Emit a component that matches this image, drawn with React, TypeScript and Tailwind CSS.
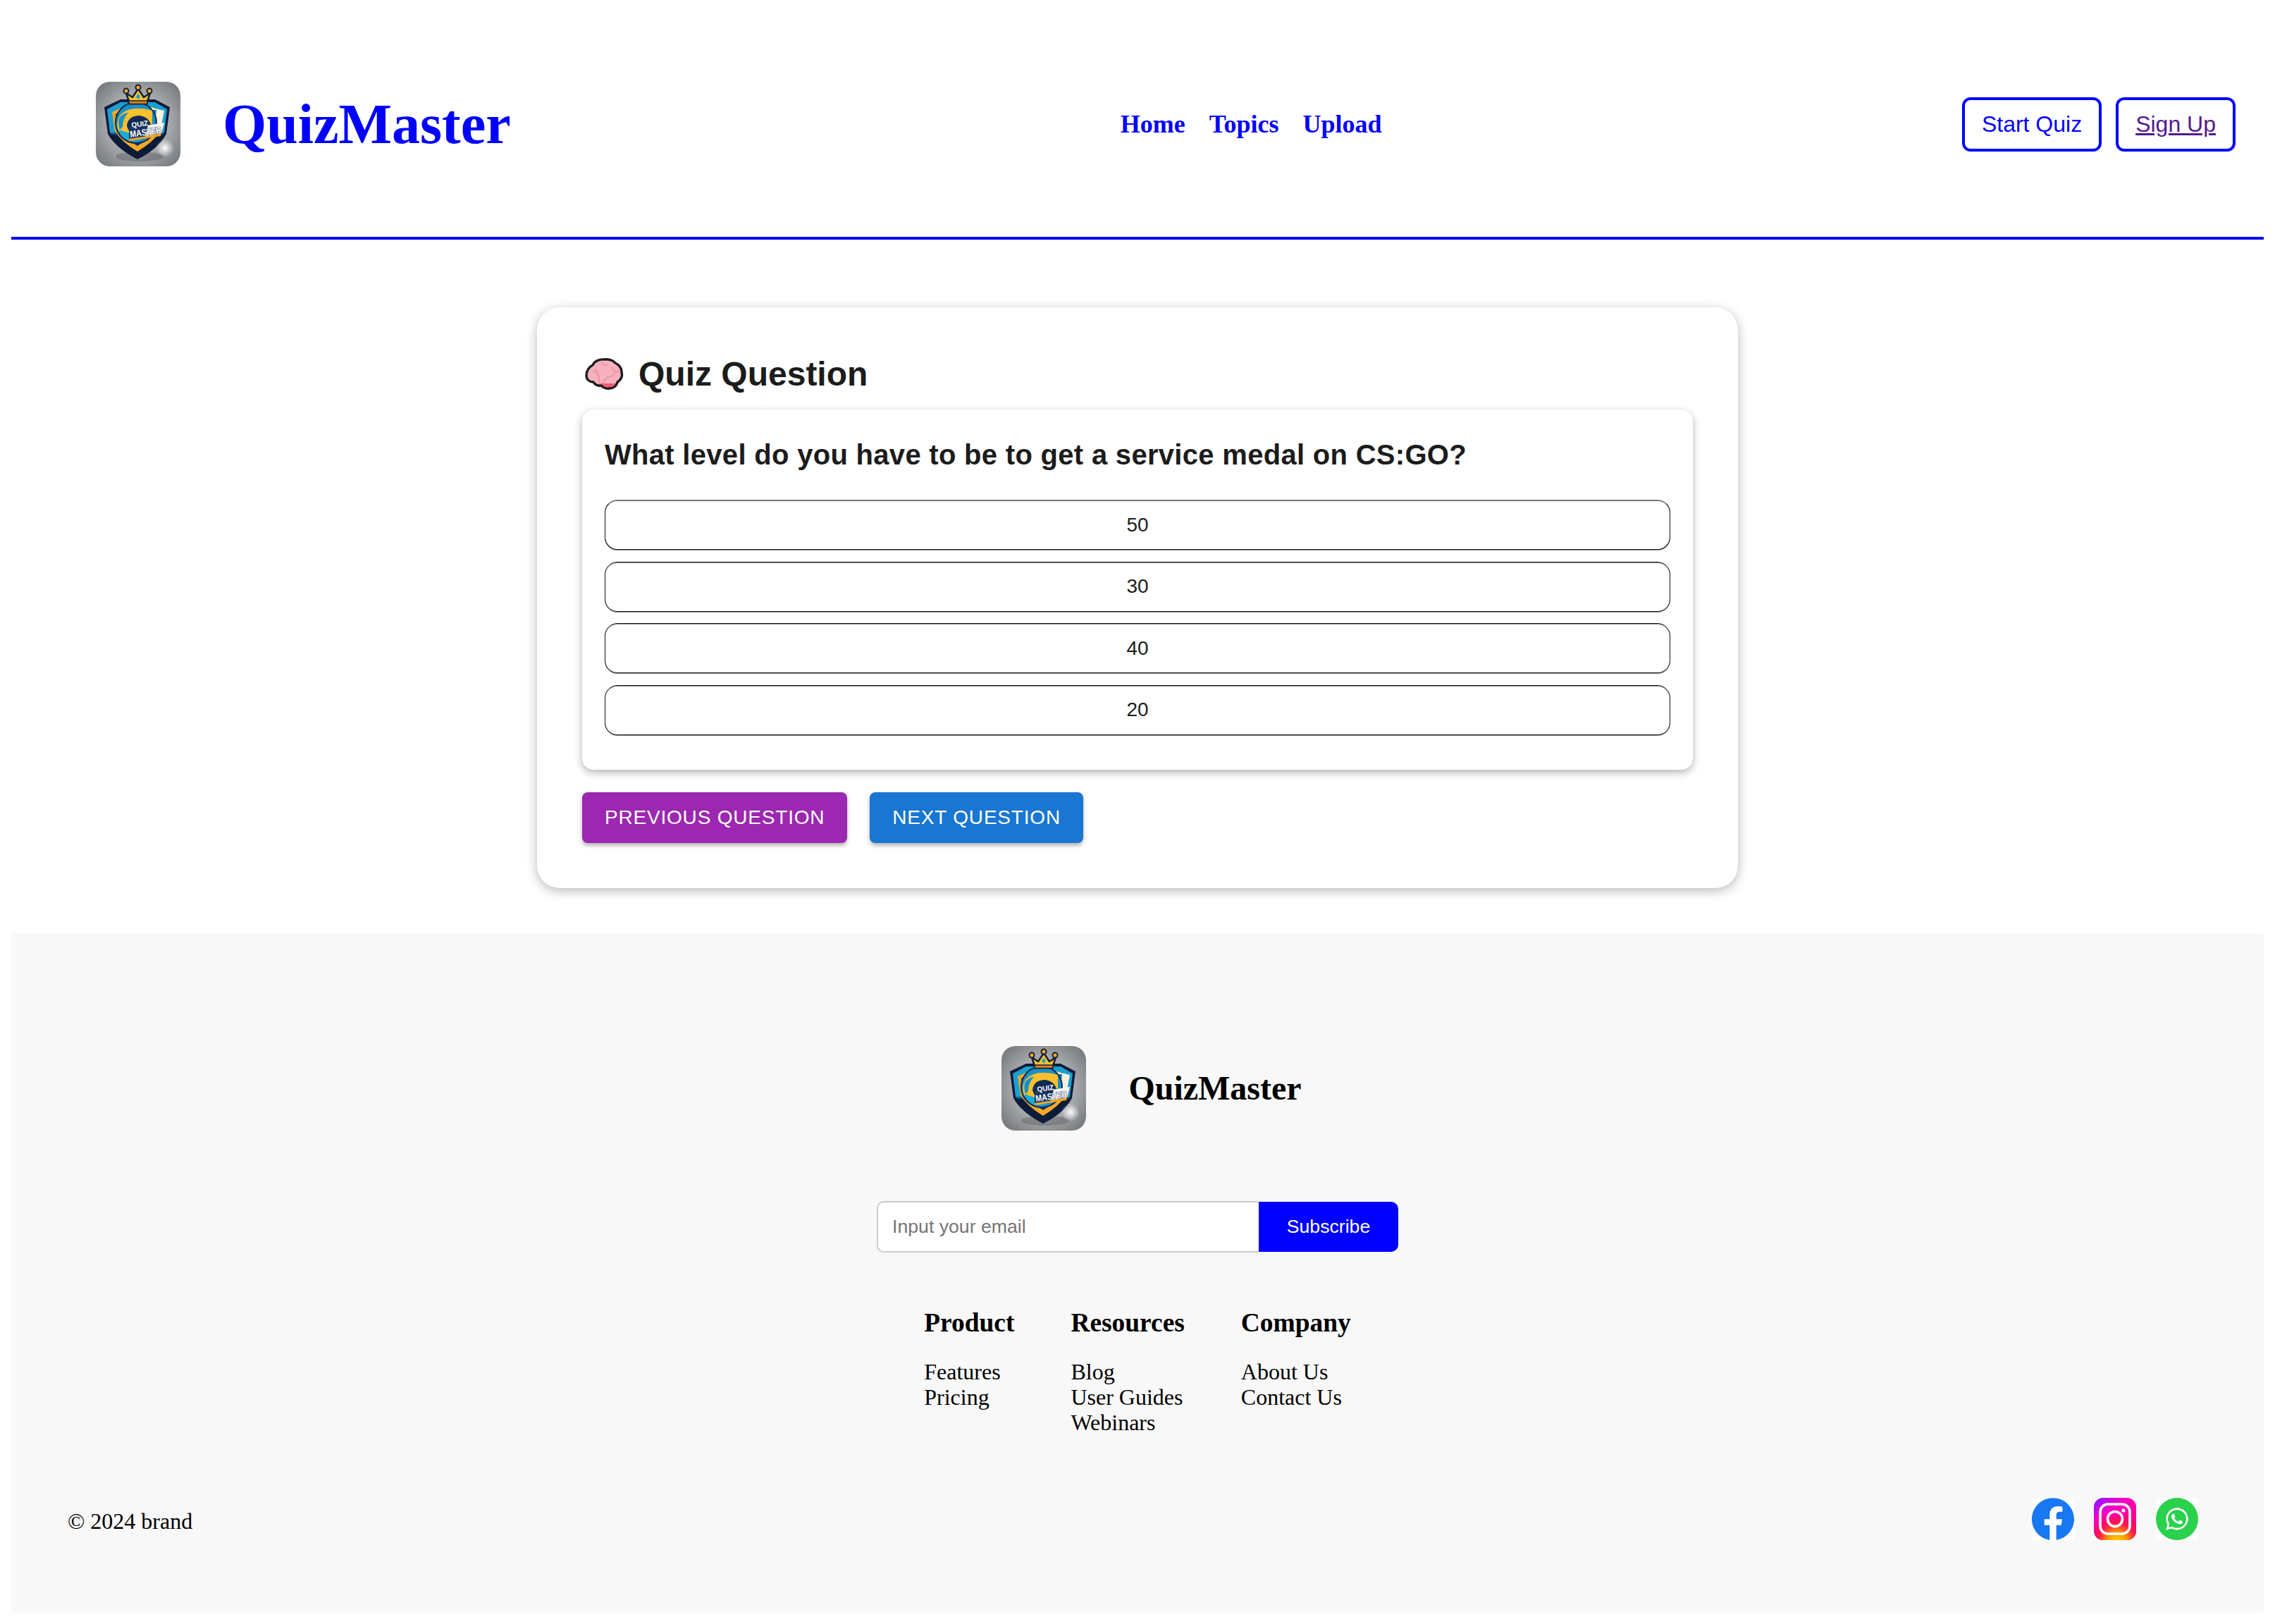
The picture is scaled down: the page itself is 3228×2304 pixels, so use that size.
import React from "react";
import { FaWhatsapp } from "react-icons/fa";

function Logo({ id }: { id: string }) {
  return (
    <svg viewBox="0 0 120 120" className="w-[120px] h-[120px] shrink-0 block">
      <defs>
        <radialGradient id={`bg${id}`} cx="50%" cy="50%" r="70%">
          <stop offset="0%" stopColor="#d6d7d9" />
          <stop offset="55%" stopColor="#a3a5a8" />
          <stop offset="100%" stopColor="#6d7074" />
        </radialGradient>
        <radialGradient id={`gl${id}`} cx="50%" cy="50%" r="50%">
          <stop offset="0%" stopColor="#ffffff" stopOpacity="0.95" />
          <stop offset="100%" stopColor="#ffffff" stopOpacity="0" />
        </radialGradient>
        <linearGradient id={`band${id}`} x1="0" y1="0" x2="0" y2="1">
          <stop offset="0%" stopColor="#1c9fd0" />
          <stop offset="55%" stopColor="#1c9fd0" />
          <stop offset="62%" stopColor="#0d1b3a" />
          <stop offset="100%" stopColor="#0d1b3a" />
        </linearGradient>
      </defs>
      <rect width="120" height="120" rx="20" fill={`url(#bg${id})`} />
      <ellipse cx="62" cy="106" rx="34" ry="7" fill="#4b4e52" opacity="0.35" />
      <path d="M12 36 L35 25 L84 25 L105 36 L100 74 Q88 96 59 110 Q28 94 17 74 Z" fill="#0d1b3a" />
      <path d="M16 39 L35 29 L84 29 L101 39 L97 72 Q86 91 59 105 Q31 90 20 72 Z" fill={`url(#band${id})`} />
      <path d="M23 43 L38 36 L80 36 L95 43 L92 70 Q82 85 59 99 Q36 85 27 70 Z" fill="#f7a823" />
      <path d="M28 46 L40 40 L78 40 L90 46 L87 68 Q78 80 59 91 Q40 80 31 68 Z" fill="#12305f" />
      <path d="M76 36 L97 41 L93 62 L72 62 Z" fill="#f7f2dd" />
      <path d="M80 40 L86 40 L84 55 L78 55 Z" fill="#1f6fa8" />
      <circle cx="57" cy="58" r="29" fill="#1a8fc4" />
      <circle cx="57" cy="58" r="29" fill="none" stroke="#0f2a55" strokeWidth="2" />
      <path d="M34 48 Q48 32 80 41 L80 60 L50 60 Q46 66 50 74 L32 70 Q28 58 34 48 Z" fill="#fbc02d" />
      <path d="M33 52 Q38 44 46 44 Q38 52 38 64 L34 68 Q31 60 33 52 Z" fill="#1a8fc4" />
      <path d="M44 62 Q46 48 62 48 Q76 50 78 62 Q76 74 60 76 Q46 74 44 62 Z" fill="#0f2a55" />
      <path d="M70 78 Q56 90 40 80 Q33 74 33 68 L50 74 Z" fill="#1fa9d6" />
      <path d="M47 68 L97 59 L92 77 L47 84 Z" fill="#f3a523" />
      <path d="M47 66 L97 58 L93 73 L47 81 Z" fill="#f8f6ee" />
      <path d="M47 66 L74 61.7 L70 77.5 L47 81 Z" fill="#16335f" />
      <text x="51" y="65" fontFamily="'Liberation Sans',sans-serif" fontWeight="700" fontSize="10" fill="#ffffff" transform="rotate(-8 51 65)">QUIZ</text>
      <text x="49" y="79" fontFamily="'Liberation Sans',sans-serif" fontWeight="700" fontSize="13" fill="#ffffff" stroke="#16335f" strokeWidth="1.1" paintOrder="stroke" textLength="45" lengthAdjust="spacingAndGlyphs" transform="rotate(-8 49 79)">MASTER</text>
      <path d="M48 31 L43 16 L52 22 L60 10 L68 22 L77 16 L72 31 Z" fill="#f9c22e" stroke="#14203a" strokeWidth="2.5" strokeLinejoin="round" />
      <rect x="47" y="27" width="26" height="4.5" fill="#e37d1f" stroke="#14203a" strokeWidth="1.5" />
      <path d="M60 17 L63 21 L60 25 L57 21 Z" fill="#12a4cf" />
      <circle cx="60" cy="8" r="3.5" fill="#f7a823" stroke="#14203a" strokeWidth="2" />
      <circle cx="43" cy="13" r="3.5" fill="#f7a823" stroke="#14203a" strokeWidth="2" />
      <circle cx="76" cy="13" r="3.5" fill="#f7a823" stroke="#14203a" strokeWidth="2" />
      <circle cx="98" cy="94" r="13" fill={`url(#gl${id})`} />
    </svg>
  );
}

const brainPath =
  "M9 33 C9 26 13 20 18 18 C20 13 27 9 34 10 C40 9 47 11 50 15 C55 17 60 23 59 29 C61 34 57 40 53 42 C52 48 47 51 42 51 C38 52 33 50 30 47 C26 48 21 46 19 42 C13 42 9 38 9 33 Z";

function Brain() {
  return (
    <svg viewBox="7 7 56 48" className="w-[56px] h-[48px] shrink-0 ml-[4px] mr-[20px]">
      <clipPath id="brainclip">
        <path d={brainPath} />
      </clipPath>
      <path d={brainPath} fill="#f6b1bf" />
      <g clipPath="url(#brainclip)">
        <rect x="27" y="44" width="30" height="10" fill="#ee5f73" />
      </g>
      <g fill="none" stroke="#ee93a5" strokeWidth="2.2" strokeLinecap="round">
        <path d="M19 27 C24 27 28 32 27 41" />
        <path d="M23 29 L23 24" />
        <path d="M30 14 C32 17 35 18 38 18" />
        <path d="M45 22 C47 26 51 28 55 27" />
        <path d="M49 27 C49 31 47 33 44 34" />
        <path d="M33 43 C34 38 38 35 42 35" />
      </g>
      <path d={brainPath} fill="none" stroke="#1d1d1f" strokeWidth="3.4" strokeLinejoin="round" />
    </svg>
  );
}

function Facebook() {
  return (
    <div className="w-[60px] h-[60px] bg-white">
      <svg viewBox="0 0 24 24" className="w-[60px] h-[60px] block">
        <path fill="#1877f2" d="M24 12.073c0-6.627-5.373-12-12-12s-12 5.373-12 12c0 5.99 4.388 10.954 10.125 11.854v-8.385H7.078v-3.47h3.047V9.43c0-3.007 1.792-4.669 4.533-4.669 1.312 0 2.686.235 2.686.235v2.953H15.83c-1.491 0-1.956.925-1.956 1.874v2.25h3.328l-.532 3.47h-2.796v8.385C19.612 23.027 24 18.062 24 12.073z" />
      </svg>
    </div>
  );
}

function Instagram() {
  return (
    <div className="w-[60px] h-[60px] bg-white">
      <svg viewBox="0 0 60 60" className="w-[60px] h-[60px] block">
        <defs>
          <radialGradient id="igy" cx="55%" cy="105%" r="75%">
            <stop offset="0%" stopColor="#ffd600" />
            <stop offset="30%" stopColor="#ff9f00" />
            <stop offset="60%" stopColor="#ff1a4a" />
            <stop offset="100%" stopColor="#ff0069" stopOpacity="0" />
          </radialGradient>
          <linearGradient id="igb" x1="0.1" y1="0" x2="0.9" y2="1">
            <stop offset="0%" stopColor="#8f14ff" />
            <stop offset="30%" stopColor="#f800c8" />
            <stop offset="70%" stopColor="#ff0090" />
            <stop offset="100%" stopColor="#ff0069" />
          </linearGradient>
        </defs>
        <rect width="60" height="60" rx="13" fill="url(#igb)" />
        <rect width="60" height="60" rx="13" fill="url(#igy)" />
        <rect x="9" y="9" width="42" height="42" rx="11" fill="none" stroke="#fff" strokeWidth="3.6" />
        <circle cx="30" cy="30" r="10.5" fill="none" stroke="#fff" strokeWidth="3.6" />
        <circle cx="42" cy="18" r="2.6" fill="#fff" />
      </svg>
    </div>
  );
}

function WhatsApp() {
  return (
    <div className="w-[60px] h-[60px] bg-white">
      <div className="w-[60px] h-[60px] rounded-full bg-[#29d14d] flex items-center justify-center text-white">
        <FaWhatsapp size={36} />
      </div>
    </div>
  );
}

const options = ["50", "30", "40", "20"];

const columns = [
  { title: "Product", links: ["Features", "Pricing"] },
  { title: "Resources", links: ["Blog", "User Guides", "Webinars"] },
  { title: "Company", links: ["About Us", "Contact Us"] },
];

export default function App() {
  return (
    <div className="p-4 bg-white font-['Liberation_Serif',serif] text-black">
      <header className="h-[324px] border-b-4 border-[#0000ff] pl-[120px] pr-[40px] flex items-center">
        <Logo id="a" />
        <h1 className="ml-[60px] text-[80px] leading-[92px] font-bold text-[#0000ff]">QuizMaster</h1>
        <nav className="ml-[865px] flex gap-[34px] text-[36px] leading-[41px] font-bold text-[#0000ff]">
          <a>Home</a>
          <a>Topics</a>
          <a>Upload</a>
        </nav>
        <div className="ml-auto flex gap-5 font-['Liberation_Sans',sans-serif] text-[32px] leading-[37px]">
          <a className="border-4 border-[#0000ff] rounded-xl px-6 py-4 text-[#0000ff]">Start Quiz</a>
          <a className="border-4 border-[#0000ff] rounded-xl px-6 py-4 text-[#551a8b] underline">Sign Up</a>
        </div>
      </header>

      <main className="pt-[96px] pb-[64px] flex justify-center font-['Liberation_Sans',sans-serif]">
        <section className="w-[1704px] rounded-[32px] bg-white p-[64px] shadow-[0_4px_16px_rgba(0,0,0,0.28)]">
          <div className="flex items-center h-[62px] mb-[19px]">
            <Brain />
            <h2 className="text-[48px] leading-[62px] font-bold text-[#1c1c1c]">Quiz Question</h2>
          </div>
          <div className="rounded-[16px] bg-white px-[32px] pt-[32px] pb-[49.5px] shadow-[0_4px_12px_rgba(0,0,0,0.3)]">
            <h3 className="text-[40px] leading-[64px] font-bold tracking-[0.3px] text-[#1c1c1c] mb-[32px]">
              What level do you have to be to get a service medal on CS:GO?
            </h3>
            <div className="flex flex-col gap-[16.5px]">
              {options.map((o) => (
                <button
                  key={o}
                  className="h-[71px] w-full rounded-[18px] border border-[#111111] bg-white text-[28px] leading-[32px] text-[#1c1c1c] text-center shadow-[0_1px_0_#909090,inset_0_1px_0_#909090] first:border-t-[#767676] first:shadow-[0_1px_0_#909090,inset_0_1px_0_#767676]"
                >
                  {o}
                </button>
              ))}
            </div>
          </div>
          <div className="mt-[32px] flex gap-[32px]">
            <button className="h-[72px] px-[32px] rounded-[8px] bg-[#9c27b0] text-white text-[28px] tracking-[0.8px] shadow-[0_4px_4px_rgba(0,0,0,0.2),0_2px_10px_rgba(0,0,0,0.12)]">
              PREVIOUS QUESTION
            </button>
            <button className="h-[72px] px-[32px] rounded-[8px] bg-[#1976d2] text-white text-[28px] tracking-[0.8px] shadow-[0_4px_4px_rgba(0,0,0,0.2),0_2px_10px_rgba(0,0,0,0.12)]">
              NEXT QUESTION
            </button>
          </div>
        </section>
      </main>

      <footer className="bg-[#f8f8f8] pt-[160px] pb-[103px] flex flex-col">
        <div className="flex items-center justify-center pl-[40px] gap-[60px]">
          <Logo id="b" />
          <span className="text-[48px] leading-[55px] font-bold pb-[2px]">QuizMaster</span>
        </div>

        <div className="mt-[100px] flex justify-center font-['Liberation_Sans',sans-serif] text-[26.67px]">
          <div className="w-[542px] h-[73px] border-2 border-[#cccccc] border-r-0 rounded-l-[10px] bg-white px-[20px] pb-[2px] flex items-center text-[#757575]">
            Input your email
          </div>
          <button className="w-[198px] h-[71px] mt-px pb-[2px] bg-[#0000ff] text-white rounded-r-[10px]">Subscribe</button>
        </div>

        <div className="mt-[78px] flex justify-center gap-[80px]">
          {columns.map((c) => (
            <div key={c.title}>
              <h3 className="text-[37.44px] leading-[43px] font-bold mb-[30px]">{c.title}</h3>
              <ul className="text-[32px] leading-[36px]">
                {c.links.map((l) => (
                  <li key={l}>{l}</li>
                ))}
              </ul>
            </div>
          ))}
        </div>

        <div className="mt-[89px] pl-[80px] pr-[93px] flex justify-between items-start">
          <p className="mt-[15px] text-[32px] leading-[36px]">© 2024 brand</p>
          <div className="flex gap-[28px]">
            <Facebook />
            <Instagram />
            <WhatsApp />
          </div>
        </div>
      </footer>
    </div>
  );
}
